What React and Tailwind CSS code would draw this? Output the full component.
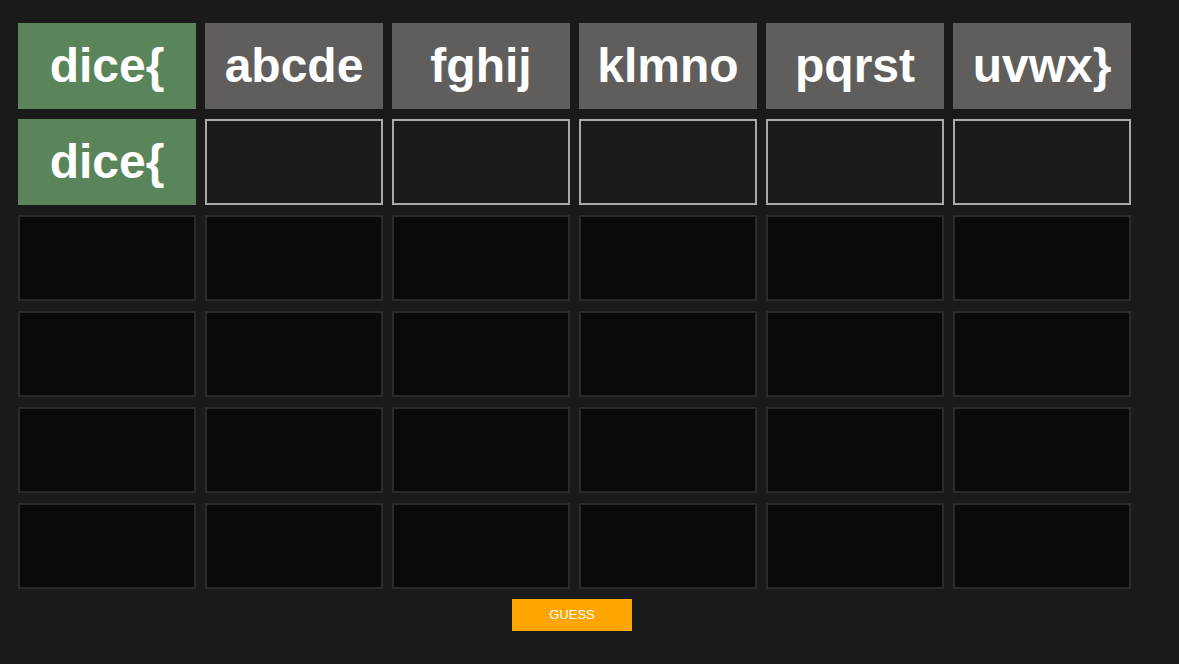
import React from 'react';

const words = ['dice{', 'abcde', 'fghij', 'klmno', 'pqrst', 'uvwx}'];

const Cell = ({ kind, text }) => {
  const styles = {
    green: 'bg-[#5a8459]',
    gray: 'bg-[#5f5e5c]',
    active: 'border-2 border-[#a9a9a9] bg-[#1a1a1a]',
    empty: 'border-2 border-[#2b2b2b] bg-[#0a0a0a]',
  };
  return (
    <div className={`h-[86px] flex items-center justify-center text-white font-bold text-[48px] leading-none ${styles[kind]}`}>
      {text}
    </div>
  );
};

export default function App() {
  const rows = [
    words.map((w, i) => ({ kind: i === 0 ? 'green' : 'gray', text: w })),
    words.map((w, i) => ({ kind: i === 0 ? 'green' : 'active', text: i === 0 ? w : '' })),
    ...Array.from({ length: 4 }, () => words.map(() => ({ kind: 'empty', text: '' }))),
  ];

  return (
    <div className="min-h-[664px] w-full bg-[#1a1a1a] pt-[23px] pl-[18px] font-['Liberation_Sans',Arial,sans-serif]">
      <div className="grid grid-cols-[repeat(6,178px)] gap-x-[9px] gap-y-[10px]">
        {rows.flat().map((c, i) => (
          <Cell key={i} kind={c.kind} text={c.text} />
        ))}
      </div>
      <div className="mt-[10px] ml-[494px]">
        <button className="w-[120px] h-[32px] bg-[#ffa500] text-white text-[13px] uppercase">
          Guess
        </button>
      </div>
    </div>
  );
}
